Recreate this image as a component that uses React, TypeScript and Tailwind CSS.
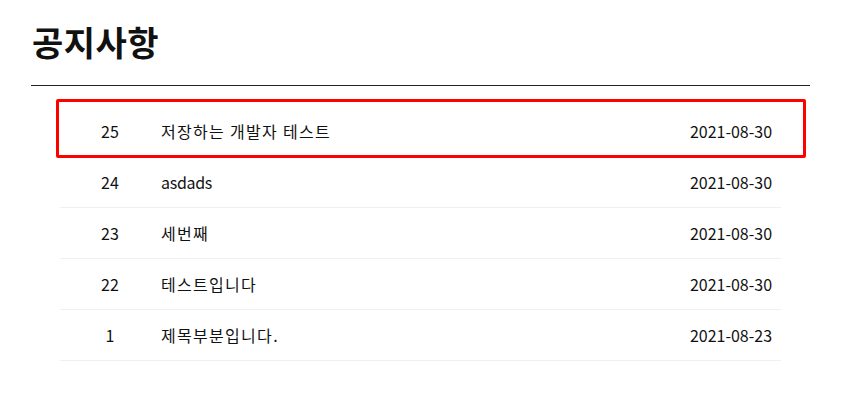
const NOTICES = [
  { id: 25, title: "저장하는 개발자 테스트", date: "2021-08-30", hangul: true },
  { id: 24, title: "asdads", date: "2021-08-30", hangul: false },
  { id: 23, title: "세번째", date: "2021-08-30", hangul: true },
  { id: 22, title: "테스트입니다", date: "2021-08-30", hangul: true },
  { id: 1, title: "제목부분입니다.", date: "2021-08-23", hangul: true },
]

export default function App() {
  return (
    <div
      className="min-h-[418px] w-[866px] bg-white pl-[31px] pr-[56px] text-[#111]"
      style={{ fontFamily: '"Noto Sans CJK KR", "Noto Sans", sans-serif' }}
    >
      <h1 className="border-b border-[#222] pt-[16px] pb-[18px] pl-[1px] text-[34px] font-bold leading-[51px] tracking-[0.5px]">
        공지사항
      </h1>

      <ul className="relative mx-[29px] mt-[20px]">
        {/* highlight box around first row */}
        <div className="pointer-events-none absolute -left-[4px] -top-[7px] h-[59px] w-[750px] rounded-[2px] border-[3px] border-[#ff0000]" />
        {NOTICES.map((n) => (
          <li key={n.id} className="flex h-[51px] items-center border-b border-[#f0f0f0] text-[16px]">
            <span className="w-[100px] text-center">{n.id}</span>
            <span className={n.hangul ? "flex-1 pl-px tracking-[1.3px]" : "flex-1 pl-px tracking-[-0.3px]"}>
              {n.title}
            </span>
            <span className="w-[100px] text-center">{n.date}</span>
          </li>
        ))}
      </ul>
    </div>
  )
}
